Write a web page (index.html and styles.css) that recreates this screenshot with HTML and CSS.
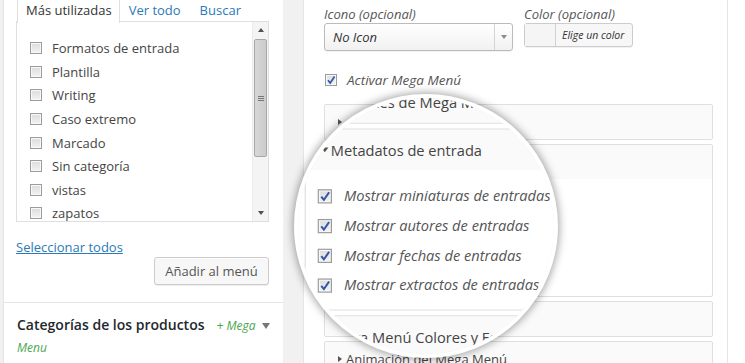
FILE: index.html
```html
<!DOCTYPE html>
<html lang="es">
<head>
<meta charset="utf-8">
<title>Mega Menú</title>
<link rel="stylesheet" href="styles.css">
</head>
<body>
<div class="page">
  <div class="left">
    <div class="tabs">
      <span class="tab active">Más utilizadas</span>
      <span class="tab link">Ver todo</span>
      <span class="tab link">Buscar</span>
    </div>
    <div class="tabpanel">
      <ul class="catlist">
        <li><span class="cb"></span>Formatos de entrada</li>
        <li><span class="cb"></span>Plantilla</li>
        <li><span class="cb"></span>Writing</li>
        <li><span class="cb"></span>Caso extremo</li>
        <li><span class="cb"></span>Marcado</li>
        <li><span class="cb"></span>Sin categoría</li>
        <li><span class="cb"></span>vistas</li>
        <li><span class="cb"></span>zapatos</li>
      </ul>
      <div class="scrollbar">
        <span class="sb-btn"><span class="sb-up"></span></span>
        <span class="sb-track"><span class="sb-thumb"><span class="grip"></span></span></span>
        <span class="sb-btn"><span class="sb-down"></span></span>
      </div>
    </div>
    <span class="selectall">Seleccionar todos</span>
    <div class="btnrow"><button class="btn">Añadir al menú</button></div>
    <div class="sec">
      <div class="sec-line"><span class="sec-title">Categorías de los productos</span><span class="mega">+ Mega</span><span class="sec-tri"></span></div>
      <div class="sec-line"><span class="mega">Menu</span></div>
    </div>
  </div>
  <div class="gutter"></div>
  <div class="right">
    <div class="fields">
      <div class="field">
        <span class="label">Icono (opcional)</span>
        <div class="select"><span class="select-val">No Icon</span><span class="select-arrow"><span class="arrow-down"></span></span></div>
      </div>
      <div class="field">
        <span class="label">Color (opcional)</span>
        <div class="colorbtn"><span class="swatch"></span><span class="colortext">Elige un color</span></div>
      </div>
    </div>
    <div class="check-row activar"><span class="cb checked"><svg viewBox="0 0 12 12" width="12" height="12"><path d="M3 6.2 L5.2 9 L9.6 2.6" fill="none" stroke="#3457a8" stroke-width="1.7"/></svg></span><span class="it">Activar Mega Menú</span></div>
    <div class="boxes">
      <div class="box"><div class="box-head"><span class="tri-right"></span></div></div>
      <div class="box open">
        <div class="box-head"></div>
      </div>
      <div class="box"><div class="box-head"><span class="tri-right"></span></div></div>
      <div class="box"><div class="box-head"><span class="tri-right"></span>Animación del Mega Menú</div></div>
    </div>
  </div>
  <div class="page-end"></div>
</div>

<div class="lens">
  <div class="lens-view">
    <div class="right">
      <div class="lens-top"></div>
      <div class="boxes">
        <div class="box"><div class="box-head"><span class="tri-right"></span>Opciones de Mega Menú</div></div>
        <div class="box open">
          <div class="box-head"><span class="tri-down"></span>Metadatos de entrada</div>
          <div class="box-body">
            <div class="check-row"><span class="cb checked"><svg viewBox="0 0 12 12" width="12" height="12"><path d="M3 6.2 L5.2 9 L9.6 2.6" fill="none" stroke="#3457a8" stroke-width="1.7"/></svg></span><span class="it">Mostrar miniaturas de entradas</span></div>
            <div class="check-row"><span class="cb checked"><svg viewBox="0 0 12 12" width="12" height="12"><path d="M3 6.2 L5.2 9 L9.6 2.6" fill="none" stroke="#3457a8" stroke-width="1.7"/></svg></span><span class="it">Mostrar autores de entradas</span></div>
            <div class="check-row"><span class="cb checked"><svg viewBox="0 0 12 12" width="12" height="12"><path d="M3 6.2 L5.2 9 L9.6 2.6" fill="none" stroke="#3457a8" stroke-width="1.7"/></svg></span><span class="it">Mostrar fechas de entradas</span></div>
            <div class="check-row"><span class="cb checked"><svg viewBox="0 0 12 12" width="12" height="12"><path d="M3 6.2 L5.2 9 L9.6 2.6" fill="none" stroke="#3457a8" stroke-width="1.7"/></svg></span><span class="it">Mostrar extractos de entradas</span></div>
          </div>
        </div>
        <div class="box"><div class="box-head"><span class="tri-right"></span>Mega Menú Colores y Fondos</div></div>
        <div class="box"><div class="box-head"><span class="tri-right"></span></div></div>
      </div>
    </div>
  </div>
</div>
</body>
</html>
```

FILE: styles.css
```css
* { box-sizing: border-box; }
html, body { margin: 0; padding: 0; }
body {
  width: 745px;
  height: 363px;
  overflow: hidden;
  position: relative;
  background: #f1f1f1;
  font-family: "Open Sans", "DejaVu Sans", sans-serif;
  font-size: 13px;
  color: #333;
}
.page { display: flex; height: 363px; padding-left: 3px; }

/* ---------- left panel ---------- */
.left {
  width: 280px;
  flex: none;
  background: #fff;
  border-left: 1px solid #e5e5e5;
}
.tabs {
  display: flex;
  height: 22px;
  padding-left: 13px;
  margin-bottom: -1px;
}
.tab {
  display: block;
  height: 23px;
  line-height: 20px;
  padding: 0 8px;
  white-space: nowrap;
}
.tab + .tab { margin-left: 1px; }
.tab + .tab + .tab { margin-left: 3px; }
.tab.active {
  padding: 0 7px 0 8px;
  background: #fff;
  border: 1px solid #dfdfdf;
  border-top: 0;
  border-bottom: 0;
  color: #333;
  position: relative;
  z-index: 1;
}
.tab.link { color: #2a7ab8; }

.tabpanel {
  display: flex;
  margin-left: 12px;
  width: 253px;
  height: 201px;
  border: 1px solid #dfdfdf;
  background: #fff;
}
.catlist {
  flex: 1;
  list-style: none;
  margin: 0;
  padding: 14.5px 0 0 13px;
  overflow: hidden;
}
.catlist li {
  display: flex;
  align-items: center;
  height: 23.6px;
  color: #444;
  white-space: nowrap;
}
.cb {
  flex: none;
  width: 12px;
  height: 12px;
  margin-right: 10px;
  border: 1px solid #9c9c9c;
  background: linear-gradient(#dcdcdc, #f3f3f3);
  box-shadow: inset 0 0 0 1px #f8f8f8;
  display: flex;
}
.cb svg { display: block; margin: -1px; }

.scrollbar {
  width: 16px;
  flex: none;
  display: flex;
  flex-direction: column;
  background: #f4f4f4;
  border-left: 1px solid #ececec;
}
.sb-btn {
  height: 16px;
  flex: none;
  display: flex;
  align-items: center;
  justify-content: center;
}
.sb-up { border: 3px solid transparent; border-bottom: 4px solid #505050; border-top: 0; width: 0; height: 0; }
.sb-down { border: 3px solid transparent; border-top: 4px solid #505050; border-bottom: 0; width: 0; height: 0; }
.sb-track { flex: 1; padding: 1px 1px 0 1px; }
.sb-thumb {
  display: flex;
  align-items: center;
  justify-content: center;
  height: 118px;
  border: 1px solid #a8a8a8;
  border-radius: 2px;
  background: linear-gradient(90deg, #d8d8d8, #cbcbcb);
}
.grip {
  width: 6px;
  height: 5px;
  border-top: 1px solid #777;
  border-bottom: 1px solid #777;
  background: linear-gradient(#777, #777) center / 6px 1px no-repeat;
}

.selectall {
  display: block;
  width: max-content;
  margin: 16px 0 0 12px;
  line-height: 19px;
  color: #2a7ab8;
  text-decoration: underline;
}
.btnrow { display: flex; justify-content: flex-end; padding-right: 14px; }
.btn {
  height: 28px;
  width: 115px;
  padding: 0;
  border: 1px solid #cccccc;
  border-radius: 3px;
  background: #f7f7f7;
  box-shadow: inset 0 1px 0 #fff, 0 1px 0 rgba(0,0,0,.07);
  color: #555;
  font-family: "Open Sans", sans-serif;
  font-size: 13px;
}
.sec {
  margin-top: 17px;
  border-top: 1px solid #e5e5e5;
  padding: 11px 0 0 13px;
}
.sec-line { display: flex; align-items: baseline; line-height: 22px; white-space: nowrap; }
.sec-title { font-size: 14px; font-weight: 600; color: #23282d; }
.mega { font-style: italic; font-size: 12px; color: #4aa64e; }
.sec-title + .mega { margin-left: 12px; }
.sec-tri {
  align-self: center;
  margin-left: 6px;
  width: 0; height: 0;
  border-left: 4px solid transparent;
  border-right: 4px solid transparent;
  border-top: 6px solid #777;
}

.gutter { width: 20px; flex: none; }
.page-end { flex: 1; background: #fff; }

/* ---------- right panel ---------- */
.right {
  width: 425px;
  height: 363px;
  flex: none;
  background: #fff;
  border-left: 1px solid #e5e5e5;
  border-right: 1px solid #e5e5e5;
  padding: 6px 0 0 20px;
}
.fields { display: flex; gap: 11px; }
.field { display: flex; flex-direction: column; }
.label { font-style: italic; color: #555; line-height: 17px; white-space: nowrap; }
.select {
  width: 189px;
  height: 28px;
  display: flex;
  border: 1px solid #bbb;
  border-radius: 3px;
  background: linear-gradient(#ffffff, #f1f1f1);
  box-shadow: 0 1px 1px rgba(0,0,0,.06);
}
.select-val { flex: 1; padding-left: 8px; line-height: 26px; font-style: italic; color: #333; }
.select-arrow {
  width: 18px;
  border-left: 1px solid #d4d4d4;
  display: flex;
  align-items: center;
  justify-content: center;
}
.arrow-down { width: 0; height: 0; border-left: 3px solid transparent; border-right: 3px solid transparent; border-top: 4px solid #8a8a8a; }
.colorbtn {
  width: 109px;
  height: 24px;
  display: flex;
  border: 1px solid #cccccc;
  border-radius: 3px;
  background: #f7f7f7;
  box-shadow: 0 1px 0 rgba(0,0,0,.05);
}
.swatch { width: 31px; border-right: 1px solid #d0d0d0; background: #f5f5f5; }
.colortext { padding-left: 6px; font-style: italic; font-size: 10.5px; line-height: 22px; color: #333; white-space: nowrap; }

.check-row { display: flex; align-items: center; white-space: nowrap; }
.check-row .cb { margin-right: 10px; }
.it { font-style: italic; color: #555; }
.activar { margin-top: 18px; height: 22px; padding-left: 1px; }
.activar .it { font-size: 13.5px; }

.boxes { margin-top: 13px; width: 389px; }
.box {
  border: 1px solid #dfdfdf;
  border-radius: 2px;
  background: #fafafa;
  margin-bottom: 4px;
  height: 36px;
}
.box.open { height: 153px; background: #fff; }
.box-head {
  height: 34px;
  display: flex;
  align-items: center;
  padding-left: 13px;
  background: #fafafa;
  color: #444;
  white-space: nowrap;
}
.tri-right { width: 0; height: 0; margin-right: 4px; border-top: 3.5px solid transparent; border-bottom: 3.5px solid transparent; border-left: 4px solid #555; }
.tri-down { width: 0; height: 0; margin-right: 2px; border-left: 3.5px solid transparent; border-right: 3.5px solid transparent; border-top: 4px solid #555; }
.box-body { padding: 9px 0 0 10px; }
.box-body .check-row { height: 25px; }

/* ---------- magnifier lens (overlay) ---------- */
.lens {
  position: absolute;
  left: 294px;
  top: 94px;
  width: 264px;
  height: 264px;
  border-radius: 50%;
  border: 4px solid #fff;
  overflow: hidden;
  background: #fff;
  box-shadow: 0 0 8px 1px rgba(0,0,0,.38), inset 0 0 6px rgba(0,0,0,.22);
  z-index: 5;
}
.lens-view {
  position: absolute;
  left: 5px;
  top: -98px;
  transform-origin: 123px 225.5px;
  transform: scale(1.19);
}
.lens-top { height: 85px; }
.lens-view .right { border-left-color: #fff; }
.lens-view .box-head,
.lens-view .box-body .it { font-size: 12.3px; }
```
